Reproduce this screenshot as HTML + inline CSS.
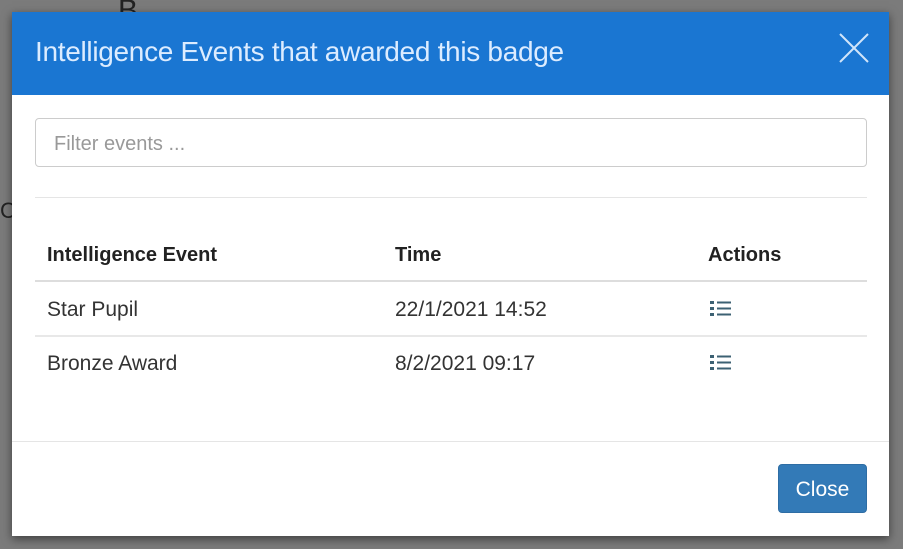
<!DOCTYPE html>
<html><head><style>
body{margin:0;width:903px;height:549px;background:#7b7b7b;position:relative;overflow:hidden;font-family:"Liberation Sans",sans-serif;color:#333}
.bgtxt{position:absolute;color:#222;font-size:30px}
.m{position:absolute;left:12px;top:12px;width:877px;height:524px;background:#fff;box-shadow:0 3px 9px rgba(0,0,0,.5)}
.h{position:absolute;left:0;top:0;width:877px;height:83px;background:#1a76d2}
.h .t{position:absolute;left:23px;top:24px;font-size:28px;color:#dcecff;white-space:nowrap;letter-spacing:-0.3px}
.inp{position:absolute;left:23px;top:106px;width:832px;height:49px;border:1px solid #ccc;border-radius:4px;box-sizing:border-box}
.inp span{position:absolute;left:18px;top:14px;font-size:20px;color:#999}
.line{position:absolute;background:#e5e5e5;height:1px}
.c{position:absolute;font-size:21px;white-space:nowrap}
.b{font-weight:bold;color:#222;font-size:20px}
.btn{position:absolute;left:766px;top:452px;width:89px;height:49px;background:#337ab7;border:1px solid #2e6da4;border-radius:4px;box-sizing:border-box;color:#fff;font-size:21px;text-align:center;line-height:50px}
</style></head><body>
<div class="bgtxt" style="left:118px;top:-6px">B</div>
<div class="bgtxt" style="left:0;top:198px;font-size:22px">C</div>
<div class="m">
<div class="h"><div class="t">Intelligence Events that awarded this badge</div>
<svg style="position:absolute;left:826px;top:20px" width="32" height="32"><path d="M2 2L30 30M30 2L2 30" stroke="#d0e4fa" stroke-width="2"/></svg></div>
<div class="inp"><span>Filter events ...</span></div>
<div class="line" style="left:23px;top:185px;width:832px"></div>
<div class="c b" style="left:35px;top:232px">Intelligence Event</div>
<div class="c b" style="left:383px;top:232px">Time</div>
<div class="c b" style="left:696px;top:232px">Actions</div>
<div class="line" style="left:23px;top:268px;width:832px;height:2px;background:#ddd"></div>
<div class="c" style="left:35px;top:286px">Star Pupil</div>
<div class="c" style="left:383px;top:286px">22/1/2021 14:52</div>
<div class="line" style="left:23px;top:323px;width:832px;height:2px;background:#e8e8e8"></div>
<div class="c" style="left:35px;top:340px">Bronze Award</div>
<div class="c" style="left:383px;top:340px">8/2/2021 09:17</div>
<svg style="position:absolute;left:698px;top:288px" width="24" height="20"><g fill="#3c6173"><rect x="0" y="1" width="4" height="3"/><rect x="0" y="7" width="4" height="3"/><rect x="0" y="13" width="4" height="3"/><rect x="7" y="1.5" width="14" height="2"/><rect x="7" y="7.5" width="14" height="2"/><rect x="7" y="13.5" width="14" height="2"/></g></svg>
<svg style="position:absolute;left:698px;top:342px" width="24" height="20"><g fill="#3c6173"><rect x="0" y="1" width="4" height="3"/><rect x="0" y="7" width="4" height="3"/><rect x="0" y="13" width="4" height="3"/><rect x="7" y="1.5" width="14" height="2"/><rect x="7" y="7.5" width="14" height="2"/><rect x="7" y="13.5" width="14" height="2"/></g></svg>
<div class="line" style="left:0;top:429px;width:877px"></div>
<div class="btn">Close</div>
</div>
</body></html>
